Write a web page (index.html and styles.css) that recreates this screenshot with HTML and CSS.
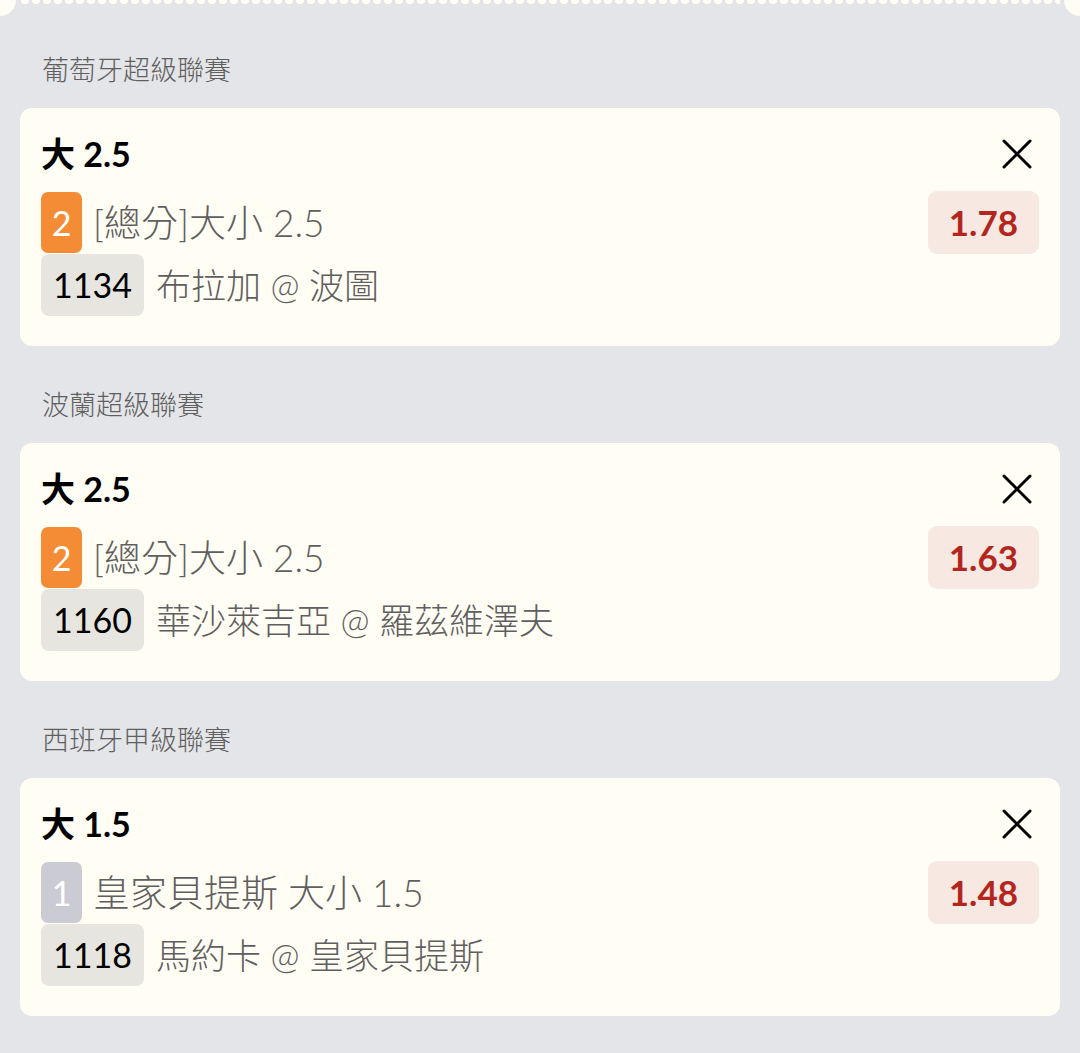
FILE: index.html
```html
<!DOCTYPE html>
<html>
	<head>
		<meta charset="utf-8">
		<title>投注單</title>
		<link rel="stylesheet" href="styles.css">
	</head>
	<body>
		<!-- 投注單外框 -->
		<div class="slip">
			<!-- 第一組 -->
			<div class="group">
				<div class="league">葡萄牙超級聯賽</div>
				<div class="bet">
					<div class="bet-title">大 2.5</div>
					<a class="close" href="javascript:;">
						<svg width="30" height="30" viewBox="0 0 30 30"><path d="M2 2L28 28M28 2L2 28" /></svg>
					</a>
					<div class="market"><span class="num">2</span>[總分]大小 2.5</div>
					<div class="odds">1.78</div>
					<div class="match"><span class="code">1134</span>布拉加 @ 波圖</div>
				</div>
			</div>
			<!-- 第二組 -->
			<div class="group">
				<div class="league">波蘭超級聯賽</div>
				<div class="bet">
					<div class="bet-title">大 2.5</div>
					<a class="close" href="javascript:;">
						<svg width="30" height="30" viewBox="0 0 30 30"><path d="M2 2L28 28M28 2L2 28" /></svg>
					</a>
					<div class="market"><span class="num">2</span>[總分]大小 2.5</div>
					<div class="odds">1.63</div>
					<div class="match"><span class="code">1160</span>華沙萊吉亞 @ 羅茲維澤夫</div>
				</div>
			</div>
			<!-- 第三組 -->
			<div class="group">
				<div class="league">西班牙甲級聯賽</div>
				<div class="bet">
					<div class="bet-title">大 1.5</div>
					<a class="close" href="javascript:;">
						<svg width="30" height="30" viewBox="0 0 30 30"><path d="M2 2L28 28M28 2L2 28" /></svg>
					</a>
					<div class="market"><span class="num num-gray">1</span>皇家貝提斯 大小 1.5</div>
					<div class="odds">1.48</div>
					<div class="match"><span class="code">1118</span>馬約卡 @ 皇家貝提斯</div>
				</div>
			</div>
		</div>
	</body>
</html>
```

FILE: styles.css
```css
*{
	margin: 0px;padding: 0px;
}
body{
	background-color: #fffdf4;
	font-family: "Lato", "Noto Sans CJK TC", sans-serif;
}
/* 灰色外框,上方鋸齒邊 */
.slip{
	position: relative;
	background-color: #e4e5e8;
	padding: 11px 20px 40px;
	min-height: 1002px;
}
.slip::before{
	content: "";
	position: absolute;
	top: 0;left: 20px;right: 20px;
	height: 4px;
	background-image: radial-gradient(circle at 5px 0, #fffdf4 4px, transparent 4.5px);
	background-size: 11px 4px;
}
.slip::after{
	content: "";
	position: absolute;
	top: -16px;left: -16px;
	width: 32px;height: 32px;
	border-radius: 50%;
	background-color: #fffdf4;
	box-shadow: 1080px 0 0 #fffdf4;
}
.group{
	padding-top: 41px;
}
/* 聯賽名稱 */
.league{
	padding-left: 22px;
	margin-bottom: 20px;
	font-size: 27px;line-height: 36px;
	font-weight: 300;
	color: #5f5f5f;
}
/* 單注卡片 */
.bet{
	display: grid;
	grid-template-columns: 1fr auto;
	align-items: center;
	background-color: #fffdf4;
	border-radius: 12px;
	padding: 24px 21px 30px;
}
.bet-title{
	font-size: 34px;line-height: 44px;
	font-weight: bold;
	color: #000;
}
.close{
	justify-self: end;
	display: block;
	width: 30px;height: 30px;
	margin-right: 7px;
}
.close svg{
	display: block;
}
.close path{
	stroke: #000;
	stroke-width: 3;
	stroke-linecap: round;
}
/* 玩法一行 */
.market{
	display: flex;
	align-items: center;
	margin-top: 16px;
	font-size: 37px;line-height: 61px;
	font-weight: 300;
	color: #5f5f5f;
}
.num{
	width: 41px;height: 61px;
	margin-right: 11px;
	border-radius: 7px;
	background-color: #f48c36;
	color: #fff;
	font-size: 34px;
	font-weight: normal;
	text-align: center;
}
.num-gray{
	background-color: #cbcbd3;
}
/* 賠率 */
.odds{
	margin-top: 15px;
	margin-bottom: -1px;
	height: 63px;
	padding: 0 21px;
	border-radius: 9px;
	background-color: #f7e8e1;
	color: #b3261e;
	font-size: 35px;line-height: 63px;
	font-weight: bold;
}
/* 賽事一行 */
.match{
	grid-column: 1 / 3;
	display: flex;
	align-items: center;
	margin-top: 1px;
	font-size: 35px;line-height: 62px;
	font-weight: 300;
	color: #5f5f5f;
}
.code{
	height: 62px;
	padding: 0 12px;
	margin-right: 12px;
	border-radius: 8px;
	background-color: #e7e5df;
	color: #000;
	font-size: 34px;
	font-weight: normal;
}
```
